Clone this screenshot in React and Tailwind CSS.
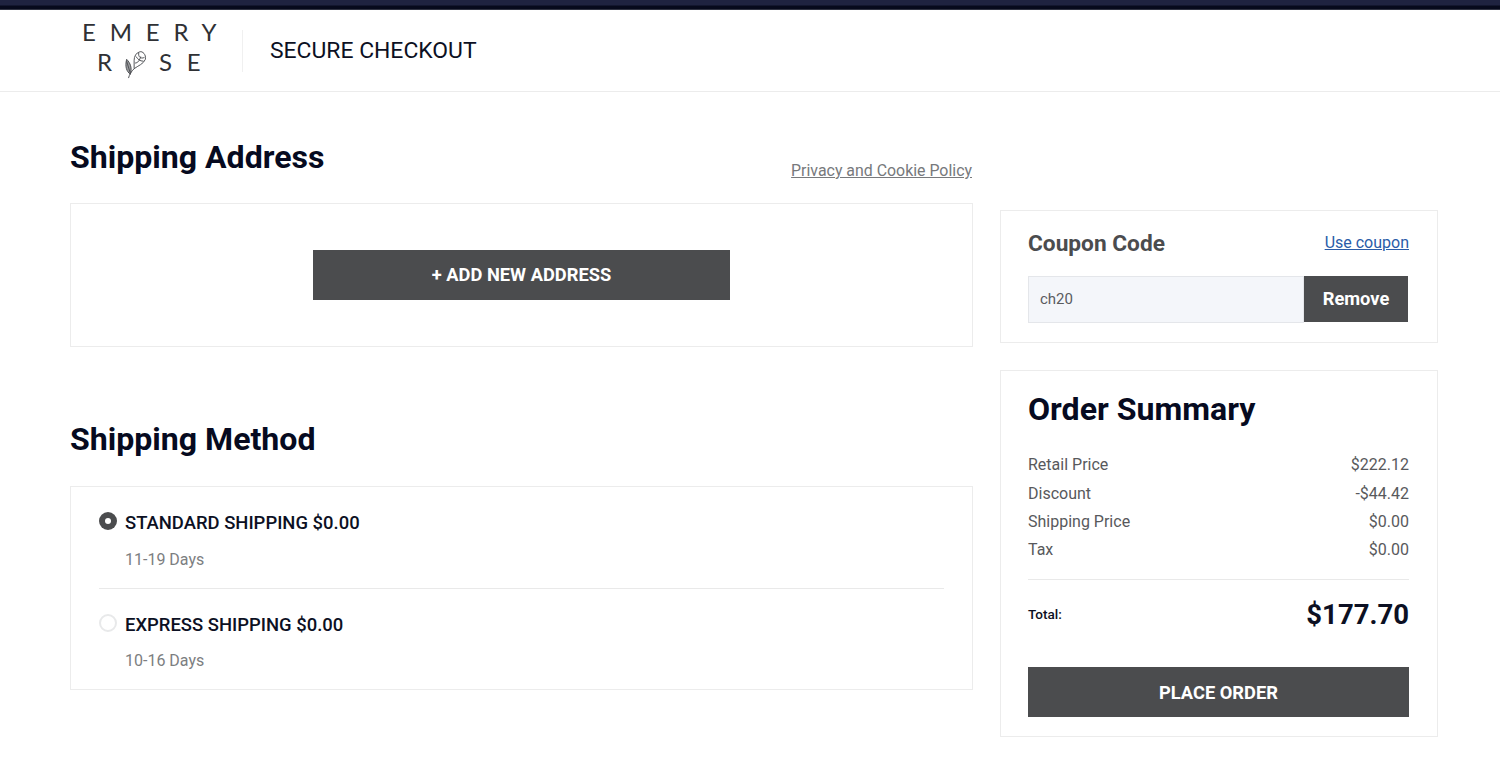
import React from "react";

function Rose() {
  return (
    <svg width="28" height="30" viewBox="0 0 26 32" fill="none" stroke="#4a4c50" strokeWidth="1" className="mt-[2px] shrink-0">
      <path d="M5 31 C6 27 8 24 11 21 C15 18 21 16 23 11 C24 6 20 2 17 3 C13 4 11 8 11 12 C11 15 11 18 11 21" />
      <path d="M16 4 C15 8 18 11 22 9 M13 8 C15 11 17 13 21 13 M12 15 C15 15 17 12 18 8" />
      <path d="M7 27 C3 24 1 19 3 11 C7 15 9 20 7 27 Z" fill="#9a9c9e" />
      <path d="M3 13 L7 26" />
    </svg>
  );
}

function SummaryRow({ label, value }) {
  return (
    <div className="flex justify-between h-[28.4px] items-center text-[16px] text-[#58595c]">
      <span>{label}</span>
      <span>{value}</span>
    </div>
  );
}

function ShippingOption({ selected, title, days }) {
  return (
    <div className="flex flex-col">
      <div className="flex items-center gap-[8px] h-[24px]">
        {selected ? (
          <span className="w-[18px] h-[18px] rounded-full bg-[#4b4c4e] flex items-center justify-center -mt-[4px]">
            <span className="w-[6px] h-[6px] rounded-full bg-white" />
          </span>
        ) : (
          <span className="w-[18px] h-[18px] rounded-full border-2 border-[#e8e9ea] bg-white -mt-[4px]" />
        )}
        <span className="text-[18.45px] font-medium text-[#0c1023] leading-[24px]">{title}</span>
      </div>
      <div className="pl-[26px] mt-[14.5px] text-[16px] leading-[20px] text-[#7c7e81]">{days}</div>
    </div>
  );
}

export default function App() {
  return (
    <div className="w-[1500px] h-[760px] overflow-hidden bg-white font-['Roboto',sans-serif]">
      <div className="h-[10px] bg-[linear-gradient(#1f2340_0,#1f2340_50%,#070a1c_60%,#070a1c_90%,#5a5c68_100%)]" />
      <header className="h-[82px] border-b border-[#ececec] flex items-center pl-[81px]">
        <div className="w-[137px] flex flex-col font-['Lato',sans-serif] text-[#2f3135] text-[24px] leading-[30px]">
          <div className="tracking-[13.8px] pl-[1px] h-[30px] -mt-[7px] whitespace-nowrap">EMERY</div>
          <div className="flex h-[30px] pl-[16px] mt-[0px] whitespace-nowrap">
            <span>R</span>
            <span className="ml-[10px]"><Rose /></span>
            <span className="ml-[9px] tracking-[14.6px]">SE</span>
          </div>
        </div>
        <div className="w-px h-[42px] bg-[#f0f0f0] ml-[24px] mr-[27px]" />
        <div className="text-[22.9px] text-[#0c1023] leading-[28px]">SECURE CHECKOUT</div>
      </header>

      <main className="flex pl-[70px] gap-[27px]">
        <div className="w-[903px] flex flex-col">
          <div className="flex justify-between items-end h-[111px]">
            <h2 className="text-[32.1px] font-bold text-[#060a20] leading-[40px] mb-[26px]">Shipping Address</h2>
            <a className="text-[15.9px] text-[#77797c] underline leading-[20px] mb-[22px] mr-[1px]">Privacy and Cookie Policy</a>
          </div>
          <section className="h-[143.5px] border border-[#ececec] flex justify-center pt-[46px]">
            <button className="w-[417px] h-[50px] bg-[#4b4c4e] text-white font-bold text-[18.3px]">+ ADD NEW ADDRESS</button>
          </section>
          <h2 className="text-[32.1px] font-bold text-[#060a20] leading-[40px] mt-[72.5px] mb-[27px]">Shipping Method</h2>
          <section className="h-[204px] border border-[#ececec] px-[28px] pt-[24px]">
            <ShippingOption selected title="STANDARD SHIPPING $0.00" days="11-19 Days" />
            <div className="h-px bg-[#e9e9e9] mt-[18px] mb-[24px]" />
            <ShippingOption title="EXPRESS SHIPPING $0.00" days="10-16 Days" />
          </section>
        </div>

        <aside className="w-[438px] flex flex-col pt-[118px] gap-[27px]">
          <section className="h-[133px] border border-[#ececec] pl-[27px] pr-[28px] pt-[19px]">
            <div className="flex justify-between items-center h-[28px]">
              <span className="text-[22.7px] font-bold text-[#4b4c4e]">Coupon Code</span>
              <a className="text-[16px] text-[#2a5ca8] underline mb-[2px]">Use coupon</a>
            </div>
            <div className="flex h-[47px] w-[380px] mt-[18px]">
              <div className="flex-1 bg-[#f4f6fa] border border-[#e4e6ea] flex items-center pl-[11px] text-[15px] text-[#5a5c5f]">ch20</div>
              <button className="w-[104px] h-[46px] bg-[#4b4c4e] text-white font-bold text-[18.3px]">Remove</button>
            </div>
          </section>
          <section className="h-[367px] border border-[#ececec] pl-[27px] pr-[28px] pt-[18px]">
            <h2 className="text-[32.1px] font-bold text-[#060a20] leading-[40px]">Order Summary</h2>
            <div className="mt-[22px]">
              <SummaryRow label="Retail Price" value="$222.12" />
              <SummaryRow label="Discount" value="-$44.42" />
              <SummaryRow label="Shipping Price" value="$0.00" />
              <SummaryRow label="Tax" value="$0.00" />
            </div>
            <div className="h-px bg-[#e9e9e9] mt-[14px]" />
            <div className="flex justify-between items-center h-[70px]">
              <span className="text-[13.5px] font-medium text-[#0c1023]">Total:</span>
              <span className="text-[27.5px] font-bold text-[#0c1023] pt-[1px]">$177.70</span>
            </div>
            <button className="w-[381px] h-[50px] pt-[2px] mt-[17px] bg-[#4b4c4e] text-white font-bold text-[18.3px]">PLACE ORDER</button>
          </section>
        </aside>
      </main>
    </div>
  );
}
